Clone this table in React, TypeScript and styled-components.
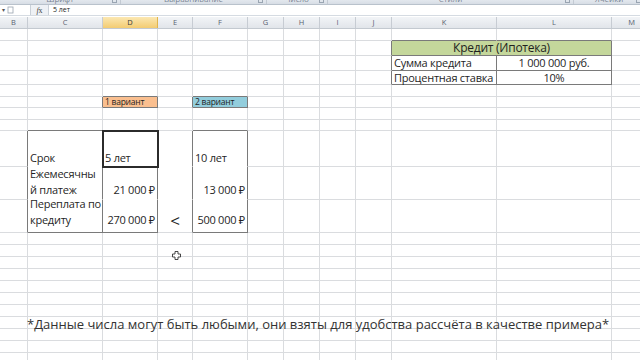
import React from "react"
import styled, { createGlobalStyle } from "styled-components"

const GlobalStyle = createGlobalStyle`
  html, body {
    margin: 0;
    padding: 0;
    background: #ffffff;
  }
  body {
    font-family: "Open Sans", "Noto Sans", sans-serif;
  }
`

const COLS = ["B", "C", "D", "E", "F", "G", "H", "I", "J", "K", "L", "M"]
const COL_W = [28, 75, 55, 35, 55, 36, 36, 36, 36, 105, 115, 40]
const ROW_H = [12, 15, 15, 14, 12, 11, 12, 11, 36, 33, 33, 12, 12, 12, 12, 12, 12, 12, 12, 12, 12, 12]
const ROW_PAD: Record<number, number> = { 8: 0, 9: 1, 10: 4 }

const GRID = "#dadcdf"
const DARK = "#7a7a7a"

type Box = { c0: number; c1: number; r0: number; r1: number }

// bordered areas of the sheet
const BOXES: Box[] = [
  { c0: 9, c1: 10, r0: 1, r1: 1 },
  { c0: 9, c1: 9, r0: 2, r1: 2 },
  { c0: 10, c1: 10, r0: 2, r1: 2 },
  { c0: 9, c1: 9, r0: 3, r1: 3 },
  { c0: 10, c1: 10, r0: 3, r1: 3 },
  { c0: 2, c1: 2, r0: 5, r1: 5 },
  { c0: 4, c1: 4, r0: 5, r1: 5 },
  { c0: 1, c1: 1, r0: 8, r1: 10 },
  { c0: 2, c1: 2, r0: 8, r1: 10 },
  { c0: 4, c1: 4, r0: 8, r1: 10 },
]

type CellDef = {
  text?: React.ReactNode
  align?: "left" | "center" | "right"
  bg?: string
  size?: number
  span?: number
  selected?: boolean
}

const CELLS: Record<string, CellDef> = {
  "1-9": { text: "Кредит (Ипотека)", align: "center", bg: "#c4d79b", size: 12, span: 2 },
  "2-9": { text: "Сумма кредита" },
  "2-10": { text: "1 000 000 руб.", align: "center" },
  "3-9": { text: "Процентная ставка" },
  "3-10": { text: "10%", align: "center" },
  "5-2": { text: "1 вариант", bg: "#fabf8f", size: 8.5 },
  "5-4": { text: "2 вариант", bg: "#92cddc", size: 8.5 },
  "8-1": { text: "Срок" },
  "8-2": { text: "5 лет", selected: true },
  "8-4": { text: "10 лет" },
  "9-1": { text: <>Ежемесячны<br />й платеж</> },
  "9-2": { text: "21 000 ₽", align: "right" },
  "9-4": { text: "13 000 ₽", align: "right" },
  "10-1": { text: <>Переплата по<br />кредиту</> },
  "10-2": { text: "270 000 ₽", align: "right" },
  "10-3": { text: "<", align: "center", size: 17 },
  "10-4": { text: "500 000 ₽", align: "right" },
}

function rightColor(r: number, c: number, span: number) {
  const last = c + span - 1
  for (const b of BOXES) {
    if (r < b.r0 || r > b.r1) continue
    if (last === b.c1 && c >= b.c0) return DARK
    if (last + 1 === b.c0) return DARK
  }
  if (r >= 8 && r <= 10 && (c === 3 || c === 2 || c === 1)) return "transparent"
  return GRID
}

function bottomColor(r: number, c: number) {
  for (const b of BOXES) {
    if (c < b.c0 || c > b.c1) continue
    if (r === b.r1 && r >= b.r0) return DARK
    if (r + 1 === b.r0) return DARK
  }
  if (r >= 8 && r <= 9 && c >= 1 && c <= 4) return "transparent"
  return GRID
}

const RIBBON_GROUPS = [
  { label: "Шрифт", w: 120 },
  { label: "Выравнивание", w: 145 },
  { label: "Число", w: 60 },
  { label: "Стили", w: 245 },
  { label: "Ячейки", w: 70 },
]

export default function App() {
  const cells: React.ReactNode[] = []
  ROW_H.forEach((_, r) => {
    for (let c = 0; c < COLS.length; c++) {
      const key = `${r}-${c}`
      const def = CELLS[key]
      if (r === 1 && c === 10) continue
      const span = def?.span ?? 1
      cells.push(
        <Cell
          key={key}
          $span={span}
          $right={rightColor(r, c, span)}
          $bottom={bottomColor(r, c)}
          $bg={def?.bg}
          $align={def?.align ?? "left"}
          $size={def?.size ?? 11}
          $selected={def?.selected}
          $tall={r >= 8 && r <= 10}
          $pad={ROW_PAD[r] ?? 0}
        >
          {def?.text && <CellText $big={c === 3}>{def.text}</CellText>}
        </Cell>,
      )
    }
  })

  return (
    <>
      <GlobalStyle />
      <Screen>
        <Ribbon>
          {RIBBON_GROUPS.map((g) => (
            <RibbonGroup key={g.label} style={{ width: g.w }}>
              <RibbonLabel>{g.label}</RibbonLabel>
              <Launcher />
            </RibbonGroup>
          ))}
        </Ribbon>
        <FormulaBar>
          <NameBox>
            <Caret>▾</Caret>
            <svg width="8" height="8" viewBox="0 0 8 8">
              <rect x="1" y="1" width="5" height="6" fill="none" stroke="#9aa4b0" strokeWidth="0.8" />
            </svg>
          </NameBox>
          <Fx>
            <i>f</i>x
          </Fx>
          <FormulaInput>5 лет</FormulaInput>
        </FormulaBar>
        <Headers>
          {COLS.map((col, i) => (
            <ColHeader key={col} $w={COL_W[i]} $active={col === "D"}>
              {col}
            </ColHeader>
          ))}
        </Headers>
        <Sheet>
          <Grid>{cells}</Grid>
          <Cursor>
            <svg width="9" height="9" viewBox="0 0 9 9">
              <path
                d="M3 0.5h3v2.5h2.5v3H6v2.5H3V6H0.5V3H3z"
                fill="#ffffff"
                stroke="#333"
                strokeWidth="0.9"
              />
            </svg>
          </Cursor>
          <Footnote>
            *Данные числа могут быть любыми, они взяты для удобства рассчёта в качестве примера*
          </Footnote>
        </Sheet>
      </Screen>
    </>
  )
}

const Screen = styled.div`
  width: 640px;
  height: 360px;
  overflow: hidden;
  background: #ffffff;
  display: flex;
  flex-direction: column;
`

const Ribbon = styled.div`
  height: 4px;
  flex: none;
  display: flex;
  overflow: hidden;
  background: linear-gradient(#e3e8ee, #d7dde5);
  border-bottom: 1px solid #b9c2cc;
`

const RibbonGroup = styled.div`
  flex: none;
  position: relative;
  display: flex;
  justify-content: center;
  border-right: 1px solid #c3cad3;
`

const RibbonLabel = styled.span`
  font-family: "Open Sans", sans-serif;
  font-size: 8px;
  line-height: 8px;
  color: #7a8593;
  margin-top: -5px;
`

const Launcher = styled.span`
  position: absolute;
  right: 3px;
  top: 0;
  width: 3px;
  height: 2px;
  border: 1px solid #9aa5b2;
  border-top: none;
`

const FormulaBar = styled.div`
  height: 10px;
  flex: none;
  display: flex;
  align-items: stretch;
  background: #eef1f5;
  border-bottom: 1px solid #d5dbe2;
`

const NameBox = styled.div`
  width: 28px;
  display: flex;
  align-items: center;
  gap: 2px;
  padding-left: 2px;
  background: #ffffff;
  border-right: 1px solid #c9d0d8;
`

const Caret = styled.span`
  font-size: 6px;
  color: #555;
`

const Fx = styled.div`
  width: 17px;
  display: flex;
  align-items: center;
  justify-content: center;
  font-family: "Liberation Serif", serif;
  font-size: 8px;
  color: #444;
`

const FormulaInput = styled.div`
  flex: 1;
  background: #ffffff;
  border-left: 1px solid #c9d0d8;
  font-family: "Open Sans", sans-serif;
  font-size: 7px;
  line-height: 10px;
  padding-left: 4px;
  color: #222;
`

const Headers = styled.div`
  height: 11px;
  flex: none;
  display: flex;
  margin-top: 1px;
  border-bottom: 1px solid #c3c9d0;
`

const ColHeader = styled.div<{ $w: number; $active?: boolean }>`
  flex: none;
  width: ${({ $w }) => $w}px;
  box-sizing: border-box;
  border-right: 1px solid ${({ $active }) => ($active ? "#e0b44c" : "#c7ccd3")};
  background: ${({ $active }) =>
    $active ? "linear-gradient(#fbe7b2, #f3cc72)" : "linear-gradient(#f2f4f7, #e1e5ea)"};
  font-family: "Open Sans", sans-serif;
  font-size: 7.5px;
  line-height: 11px;
  text-align: center;
  color: ${({ $active }) => ($active ? "#3b3b3b" : "#5a6270")};
`

const Sheet = styled.div`
  position: relative;
  flex: 1;
  overflow: hidden;
`

const Grid = styled.div`
  display: grid;
  grid-template-columns: ${COL_W.map((w) => `${w}px`).join(" ")};
  grid-template-rows: ${ROW_H.map((h) => `${h}px`).join(" ")};
`

const Cell = styled.div<{
  $span: number
  $right: string
  $bottom: string
  $bg?: string
  $align: string
  $size: number
  $selected?: boolean
  $tall?: boolean
  $pad: number
}>`
  grid-column: span ${({ $span }) => $span};
  box-sizing: border-box;
  position: relative;
  border-right: 1px solid ${({ $right }) => $right};
  border-bottom: 1px solid ${({ $bottom }) => $bottom};
  background: ${({ $bg }) => $bg ?? "transparent"};
  display: flex;
  align-items: ${({ $tall }) => ($tall ? "flex-end" : "center")};
  justify-content: ${({ $align }) =>
    $align === "center" ? "center" : $align === "right" ? "flex-end" : "flex-start"};
  padding: ${({ $tall, $pad }) => ($tall ? `0 2px ${$pad}px 2px` : "0 2px")};
  font-family: "Open Sans", "Noto Sans", sans-serif;
  font-size: ${({ $size }) => $size}px;
  color: #1f1f1f;
  white-space: nowrap;
  overflow: visible;
  ${({ $selected }) =>
    $selected &&
    `
    outline: 2px solid #2b2b2b;
    outline-offset: -1px;
    z-index: 1;
  `}
`

const CellText = styled.span<{ $big?: boolean }>`
  line-height: ${({ $big }) => ($big ? "14px" : "16px")};
  letter-spacing: -0.25px;
`

const Cursor = styled.div`
  position: absolute;
  left: 172px;
  top: 214px;
  width: 9px;
  height: 9px;
`

const Footnote = styled.div`
  position: absolute;
  left: 27px;
  top: 286px;
  font-family: "Open Sans", "Noto Sans", sans-serif;
  font-size: 13px;
  color: #333333;
  white-space: nowrap;
`
